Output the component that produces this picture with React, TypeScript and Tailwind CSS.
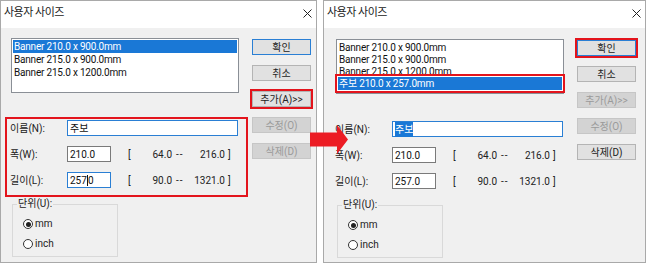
import type { ReactNode } from "react";

const items = ["Banner 210.0 x 900.0mm", "Banner 215.0 x 900.0mm", "Banner 215.0 x 1200.0mm"];

function CloseIcon() {
  return (
    <svg width="9" height="9" viewBox="0 0 9 9" className="shrink-0">
      <path d="M0.5 0.5 L8.5 8.5 M8.5 0.5 L0.5 8.5" stroke="#222" strokeWidth="1" />
    </svg>
  );
}

function Btn({
  children,
  disabled,
  primary,
  marked,
}: {
  children: ReactNode;
  disabled?: boolean;
  primary?: boolean;
  marked?: boolean;
}) {
  const look = disabled
    ? "border-[#c6c6c6] bg-[#d3d3d3] text-[#9a9a9a]"
    : primary
      ? "border-[#2a7fd4] bg-[#e1e1e1] text-[#222]"
      : "border-[#b4b4b4] bg-[#e1e1e1] text-[#222]";
  return (
    <div className={`relative flex h-[16px] w-[59px] items-center justify-center border text-[10px] ${look}`}>
      {children}
      {marked && <div className="absolute -inset-[3px] border-2 border-[#e3141c]" />}
    </div>
  );
}

function Radio({ on, label }: { on?: boolean; label: string }) {
  return (
    <div className="flex h-[10px] items-center gap-[2px] text-[10px] leading-none text-[#222]">
      <span className="flex h-[10px] w-[10px] items-center justify-center rounded-full border border-[#333] bg-white">
        {on && <span className="h-[5px] w-[5px] rounded-full bg-[#222]" />}
      </span>
      <span>{label}</span>
    </div>
  );
}

function Range({ lo, hi }: { lo: string; hi: string }) {
  return (
    <div className="flex items-center whitespace-nowrap text-[10px] text-[#222]">
      <span className="ml-[17px] w-[4px]">[</span>
      <span className="w-[40px] text-right">{lo}</span>
      <span className="ml-[4px] w-[10px] tracking-[1px]">--</span>
      <span className="w-[39px] text-right">{hi}</span>
      <span className="ml-[3px]">]</span>
    </div>
  );
}

function Dialog({ after }: { after?: boolean }) {
  return (
    <div className={`flex h-[263px] flex-col border border-[#a9a9a9] bg-[#f0f0f0] ${after ? "w-[323px]" : "w-[317px]"}`}>
      <div className="flex h-[27px] items-center justify-between bg-white pb-[2px] pl-[3px] pr-[4px]">
        <span className="text-[11px] tracking-[-0.5px] text-[#222]">사용자 사이즈</span>
        <CloseIcon />
      </div>
      <div className={`flex ${after ? "pl-[6px] pt-[11px]" : "pl-[4px] pt-[10px]"}`}>
        <div className="w-[243px]">
          <div className="ml-[6px] h-[55px] w-[228px] border border-[#8a8f96] bg-white p-[1px] text-[10px] tracking-[-0.2px] text-[#111]">
            {items.map((t, i) =>
              !after && i === 0 ? (
                <div key={t} className="flex h-[13px] items-center bg-[#1a78d6] pl-[1px] text-white">
                  {t}
                </div>
              ) : (
                <div key={t} className={`flex items-center overflow-hidden pl-[1px] ${after ? "h-[12px]" : "h-[13px]"}`}>
                  {t}
                </div>
              ),
            )}
            {after && (
              <div className="relative flex h-[13px] items-center bg-[#1a78d6] pl-[1px] text-white">
                주보 210.0 x 257.0mm
                <div className="absolute -bottom-[3px] -left-[3px] -right-[3px] -top-[3px] border-2 border-[#e3141c]" />
              </div>
            )}
          </div>

          <div
            className={`mt-[24px] flex flex-col gap-[10px] border-2 pb-[7px] pt-[1px] ${after ? "border-transparent" : "border-[#e3141c]"}`}
          >
            <div className="flex items-center">
              <span className="w-[60px] pl-[3px] text-[10px] text-[#222]">이름(N):</span>
              <div className="flex h-[16px] w-[171px] items-center border border-[#2a7fd4] bg-white pl-[2px] text-[10px] text-[#111]">
                {after ? <span className="bg-[#1a78d6] text-white">주보</span> : "주보"}
              </div>
            </div>
            <div className="flex items-center">
              <span className="w-[60px] pl-[3px] text-[10px] text-[#222]">폭(W):</span>
              <div className="flex h-[16px] w-[44px] items-center border border-[#7a7a7a] bg-white pl-[2px] text-[10px] text-[#111]">
                210.0
              </div>
              <Range lo="64.0" hi="216.0" />
            </div>
            <div className="flex items-center">
              <span className="w-[60px] pl-[3px] text-[10px] text-[#222]">길이(L):</span>
              <div
                className={`flex h-[16px] w-[44px] items-center border bg-white pl-[2px] text-[10px] text-[#111] ${after ? "border-[#7a7a7a]" : "border-[#2a7fd4]"}`}
              >
                {after ? (
                  "257.0"
                ) : (
                  <>
                    257<span className="h-[11px] w-px bg-[#111]" />0
                  </>
                )}
              </div>
              <Range lo="90.0" hi="1321.0" />
            </div>
          </div>

          <div className="relative ml-[7px] mt-[7px] flex h-[53px] w-[106px] flex-col gap-[10px] border border-[#d9d9d9] pl-[10px] pt-[14px]">
            <span className="absolute -top-[7px] left-[4px] bg-[#f0f0f0] px-[1px] text-[10px] leading-[12px] text-[#222]">
              단위(U):
            </span>
            <Radio on label="mm" />
            <Radio label="inch" />
          </div>
        </div>

        <div className="ml-[4px] mt-[1px] flex flex-col gap-[10px]">
          <Btn primary marked={after}>
            확인
          </Btn>
          <Btn>취소</Btn>
          <Btn disabled={after} marked={!after}>
            추가(A)&gt;&gt;
          </Btn>
          <Btn disabled>수정(O)</Btn>
          <Btn disabled={!after}>삭제(D)</Btn>
        </div>
      </div>
    </div>
  );
}

export default function App() {
  return (
    <div className="relative flex h-[264px] w-[646px] gap-[6px] bg-white font-['Roboto','Noto_Sans_CJK_KR',sans-serif]">
      <Dialog />
      <Dialog after />
      <svg width="38" height="29" viewBox="0 0 38 29" className="absolute left-[310px] top-[125px]">
        <path d="M0 7.5 H27 V0 L38 14.5 L27 29 V21.5 H0 Z" fill="#ec1c24" />
      </svg>
    </div>
  );
}
